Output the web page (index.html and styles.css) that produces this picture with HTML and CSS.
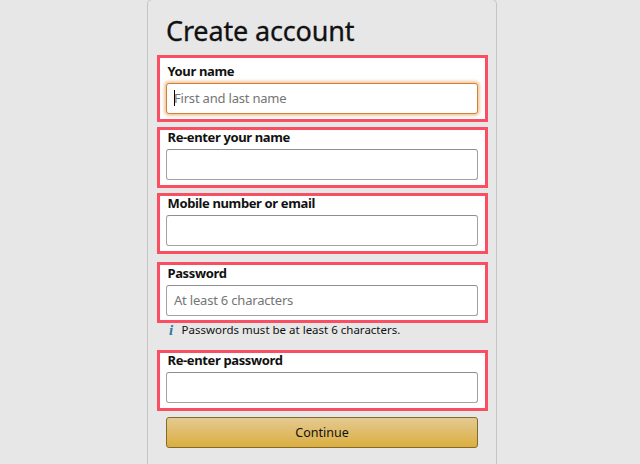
FILE: index.html
```html
<!DOCTYPE html>
<html lang="en">
<head>
    <meta charset="UTF-8">
    <meta name="viewport" content="width=device-width, initial-scale=1.0">
    <title>Create account</title>
    <link rel="stylesheet" href="styles.css">
</head>
<body>

    <form class="card">
        <h1>Create account</h1>

        <div class="field field-name">
            <label for="name">Your name</label>
            <div class="input-wrap">
                <input type="text" id="name" class="active" placeholder="First and last name">
                <span class="caret"></span>
            </div>
        </div>

        <div class="field">
            <label for="name-again">Re-enter your name</label>
            <input type="text" id="name-again">
        </div>

        <div class="field">
            <label for="email">Mobile number or email</label>
            <input type="text" id="email">
        </div>

        <div class="field field-password">
            <label for="password">Password</label>
            <input type="password" id="password" placeholder="At least 6 characters">
        </div>
        <p class="hint"><i class="info">i</i><span>Passwords must be at least 6 characters.</span></p>

        <div class="field">
            <label for="password-again">Re-enter password</label>
            <input type="password" id="password-again">
        </div>

        <button type="button" class="continue-btn">Continue</button>
    </form>

</body>
</html>
```

FILE: styles.css
```css
* {
    box-sizing: border-box;
}

body {
    margin: 0;
    height: 464px;
    overflow: hidden;
    background-color: #e7e7e7;
    color: #111;
    font-family: 'Noto Sans', sans-serif;
}

.card {
    width: 350px;
    height: 480px;
    margin: -1px 0 0 147px;
    padding: 9px 8px 0 9px;
    border: 1px solid #c4c4c4;
    border-radius: 5px;
}

h1 {
    margin: 0 0 5px 9px;
    height: 41px;
    line-height: 44px;
    font-size: 27px;
    font-weight: 400;
    letter-spacing: -0.15px;
    -webkit-text-stroke: 0.3px #111;
    white-space: nowrap;
}

.field {
    width: 331px;
    height: 61px;
    margin-bottom: 5px;
    padding: 0 6px;
    border: 3px solid #fa4e62;
    background-color: white;
}

.field-name {
    height: 67px;
    padding-top: 6px;
}

.field-password {
    margin-top: 8px;
    margin-bottom: 0;
    padding-top: 1px;
}

label {
    display: block;
    height: 19px;
    padding-left: 1.5px;
    line-height: 14px;
    font-size: 13px;
    font-weight: 700;
    letter-spacing: -0.37px;
    white-space: nowrap;
}

.input-wrap {
    position: relative;
}

input {
    display: block;
    width: 312px;
    height: 31px;
    padding: 0 7px 2px;
    border: 1px solid #a2a2a2;
    border-top-color: #8e8e8e;
    border-radius: 3px;
    outline: none;
    background-color: white;
    font-family: inherit;
    font-size: 13px;
    letter-spacing: -0.2px;
}

input::placeholder {
    color: #757575;
    opacity: 1;
}

input.active {
    border-color: #cf8039;
    box-shadow: 0 0 3px 2px rgba(228, 121, 17, 0.4);
}

.caret {
    position: absolute;
    top: 7px;
    left: 8px;
    width: 1px;
    height: 16px;
    background-color: #000;
}

.hint {
    display: flex;
    height: 27px;
    margin: 0;
    padding-left: 12px;
    line-height: 14px;
    font-size: 11.5px;
    white-space: nowrap;
}

.info {
    width: 12.5px;
    color: #2a7ba3;
    font-family: 'Liberation Serif', serif;
    font-size: 15px;
    font-weight: 700;
}

.continue-btn {
    display: block;
    width: 312px;
    height: 31px;
    margin: 6px 0 0 9px;
    padding: 0;
    border: 1px solid #846a29;
    border-radius: 3px;
    background: linear-gradient(to bottom, #e4ca92, #dbae40);
    color: #111;
    font-family: inherit;
    font-size: 12.5px;
}
```
